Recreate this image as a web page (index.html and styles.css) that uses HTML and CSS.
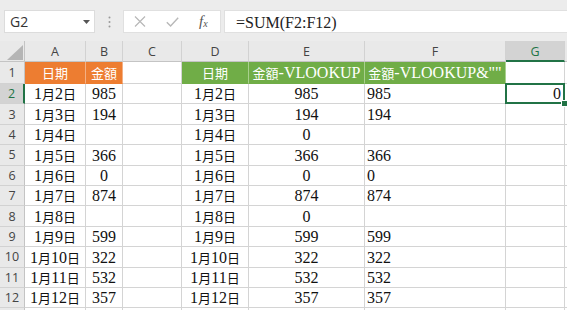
FILE: index.html
```html
<!DOCTYPE html>
<html lang="zh-Hant">
<head>
<meta charset="utf-8">
<title>VLOOKUP</title>
<link rel="stylesheet" href="styles.css">
</head>
<body>
<div class="toolbar">
  <div class="namebox"><span>G2</span><svg class="dd" width="7" height="4" viewBox="0 0 7 4"><path d="M0 0h7L3.5 4z" fill="#555"/></svg></div>
  <div class="grip"><svg width="3" height="12" viewBox="0 0 3 12"><circle cx="1.5" cy="1.5" r="1" fill="#999"/><circle cx="1.5" cy="6" r="1" fill="#999"/><circle cx="1.5" cy="10.5" r="1" fill="#999"/></svg></div>
  <div class="fbtns">
    <svg class="ic-x" width="12" height="11" viewBox="0 0 12 11"><path d="M1 0.5L11 10.5M11 0.5L1 10.5" stroke="#b8b8b8" stroke-width="1.2" fill="none"/></svg>
    <svg class="ic-ok" width="13" height="10" viewBox="0 0 13 10"><path d="M0.8 5.2L4.6 9L12.2 0.8" stroke="#b8b8b8" stroke-width="1.4" fill="none"/></svg>
    <span class="fx">f<sub>x</sub></span>
  </div>
  <div class="finput">=SUM(F2:F12)</div>
</div>

<div class="sheet">
  <div class="ch corner"><svg width="16" height="15" viewBox="0 0 16 15"><path d="M16 0V15H0z" fill="#b5b5b5"/></svg></div>
  <div class="ch">A</div><div class="ch">B</div><div class="ch">C</div><div class="ch">D</div><div class="ch">E</div><div class="ch">F</div><div class="ch ch-sel">G</div><div class="ch ch-end"></div>

  <div class="rh">1</div>
  <div class="cell hd or"><span class="k">日期</span></div>
  <div class="cell hd or"><span class="k">金額</span></div>
  <div class="cell"></div>
  <div class="cell hd gr"><span class="k">日期</span></div>
  <div class="cell hd gr"><span class="k">金額</span>-VLOOKUP</div>
  <div class="cell hd gr"><span class="k">金額</span>-VLOOKUP&amp;""</div>
  <div class="cell"></div><div class="cell end"></div>

  <div class="rh rh-sel">2</div>
  <div class="cell c">1<span class="k">月</span>2<span class="k">日</span></div><div class="cell c">985</div><div class="cell"></div>
  <div class="cell c">1<span class="k">月</span>2<span class="k">日</span></div><div class="cell c">985</div><div class="cell l">985</div>
  <div class="cell r sel">0</div><div class="cell end"></div>

  <div class="rh">3</div>
  <div class="cell c">1<span class="k">月</span>3<span class="k">日</span></div><div class="cell c">194</div><div class="cell"></div>
  <div class="cell c">1<span class="k">月</span>3<span class="k">日</span></div><div class="cell c">194</div><div class="cell l">194</div>
  <div class="cell"></div><div class="cell end"></div>

  <div class="rh">4</div>
  <div class="cell c">1<span class="k">月</span>4<span class="k">日</span></div><div class="cell c"></div><div class="cell"></div>
  <div class="cell c">1<span class="k">月</span>4<span class="k">日</span></div><div class="cell c">0</div><div class="cell l"></div>
  <div class="cell"></div><div class="cell end"></div>

  <div class="rh">5</div>
  <div class="cell c">1<span class="k">月</span>5<span class="k">日</span></div><div class="cell c">366</div><div class="cell"></div>
  <div class="cell c">1<span class="k">月</span>5<span class="k">日</span></div><div class="cell c">366</div><div class="cell l">366</div>
  <div class="cell"></div><div class="cell end"></div>

  <div class="rh">6</div>
  <div class="cell c">1<span class="k">月</span>6<span class="k">日</span></div><div class="cell c">0</div><div class="cell"></div>
  <div class="cell c">1<span class="k">月</span>6<span class="k">日</span></div><div class="cell c">0</div><div class="cell l">0</div>
  <div class="cell"></div><div class="cell end"></div>

  <div class="rh">7</div>
  <div class="cell c">1<span class="k">月</span>7<span class="k">日</span></div><div class="cell c">874</div><div class="cell"></div>
  <div class="cell c">1<span class="k">月</span>7<span class="k">日</span></div><div class="cell c">874</div><div class="cell l">874</div>
  <div class="cell"></div><div class="cell end"></div>

  <div class="rh">8</div>
  <div class="cell c">1<span class="k">月</span>8<span class="k">日</span></div><div class="cell c"></div><div class="cell"></div>
  <div class="cell c">1<span class="k">月</span>8<span class="k">日</span></div><div class="cell c">0</div><div class="cell l"></div>
  <div class="cell"></div><div class="cell end"></div>

  <div class="rh">9</div>
  <div class="cell c">1<span class="k">月</span>9<span class="k">日</span></div><div class="cell c">599</div><div class="cell"></div>
  <div class="cell c">1<span class="k">月</span>9<span class="k">日</span></div><div class="cell c">599</div><div class="cell l">599</div>
  <div class="cell"></div><div class="cell end"></div>

  <div class="rh">10</div>
  <div class="cell c">1<span class="k">月</span>10<span class="k">日</span></div><div class="cell c">322</div><div class="cell"></div>
  <div class="cell c">1<span class="k">月</span>10<span class="k">日</span></div><div class="cell c">322</div><div class="cell l">322</div>
  <div class="cell"></div><div class="cell end"></div>

  <div class="rh">11</div>
  <div class="cell c">1<span class="k">月</span>11<span class="k">日</span></div><div class="cell c">532</div><div class="cell"></div>
  <div class="cell c">1<span class="k">月</span>11<span class="k">日</span></div><div class="cell c">532</div><div class="cell l">532</div>
  <div class="cell"></div><div class="cell end"></div>

  <div class="rh">12</div>
  <div class="cell c">1<span class="k">月</span>12<span class="k">日</span></div><div class="cell c">357</div><div class="cell"></div>
  <div class="cell c">1<span class="k">月</span>12<span class="k">日</span></div><div class="cell c">357</div><div class="cell l">357</div>
  <div class="cell"></div><div class="cell end"></div>

  <div class="rh"></div>
  <div class="cell"></div><div class="cell"></div><div class="cell"></div><div class="cell"></div><div class="cell"></div><div class="cell"></div><div class="cell"></div><div class="cell end"></div>
</div>
</body>
</html>
```

FILE: styles.css
```css
html, body {
  margin: 0;
  padding: 0;
}
body {
  width: 567px;
  height: 310px;
  overflow: hidden;
  background: #e9e9e9;
  font-family: "Liberation Serif", "Noto Sans CJK TC", serif;
}

.toolbar {
  height: 41px;
  box-sizing: border-box;
  padding: 10px 0 0 4px;
  display: flex;
  align-items: flex-start;
  background: #ececec;
}
.namebox {
  width: 91px;
  height: 23px;
  box-sizing: border-box;
  background: #fff;
  border: 1px solid #dcdcdc;
  display: flex;
  align-items: center;
  justify-content: space-between;
  padding: 0 4px 0 5px;
  font-family: "Open Sans", "Noto Sans", sans-serif;
  font-size: 14px;
  color: #333;
}
.grip {
  width: 28px;
  height: 23px;
  display: flex;
  align-items: center;
  justify-content: center;
}
.fbtns {
  width: 98px;
  height: 23px;
  box-sizing: border-box;
  background: #fff;
  border: 1px solid #e0e0e0;
  display: flex;
  align-items: center;
  padding-left: 10px;
}
.ic-x { margin-right: 20px; }
.ic-ok { margin-right: 20px; }
.fx {
  font-family: "Liberation Serif", serif;
  font-style: italic;
  font-size: 15px;
  color: #555;
  line-height: 1;
}
.fx sub {
  font-size: 10px;
  vertical-align: baseline;
  position: relative;
  top: 1px;
}
.finput {
  flex: 1;
  height: 23px;
  margin-left: 3px;
  box-sizing: border-box;
  background: #fff;
  border: 1px solid #e0e0e0;
  border-right: none;
  padding: 1px 0 0 11px;
  font-size: 16px;
  line-height: 21px;
  color: #222;
}

.sheet {
  display: grid;
  grid-template-columns: 25px 61px 37px 59px 67px 116px 141px 59px 1fr;
  grid-template-rows: 21px 22px repeat(11, 20.4px) 20px;
  background: #fff;
}

.ch {
  background: #e9e9e9;
  border-right: 1px solid #d2d2d2;
  border-bottom: 1px solid #c4c4c4;
  box-sizing: border-box;
  display: flex;
  align-items: center;
  justify-content: center;
  font-family: "Open Sans", "Noto Sans", sans-serif;
  font-size: 12.5px;
  color: #444;
  padding-top: 1px;
}
.corner {
  align-items: flex-end;
  justify-content: flex-end;
  padding: 0 1px 1px 0;
  border-right-color: #c4c4c4;
}
.ch-sel {
  background: #d3d3d3;
  color: #217346;
  border-bottom: 2px solid #217346;
}
.ch-end { border-right: none; }

.rh {
  background: #e9e9e9;
  border-right: 1px solid #c4c4c4;
  border-bottom: 1px solid #d2d2d2;
  box-sizing: border-box;
  display: flex;
  align-items: center;
  justify-content: center;
  font-family: "Open Sans", "Noto Sans", sans-serif;
  font-size: 12.5px;
  color: #444;
}
.rh-sel {
  background: #d3d3d3;
  color: #217346;
  border-right: 2px solid #217346;
}

.cell {
  border-right: 1px solid #d4d4d4;
  border-bottom: 1px solid #d4d4d4;
  box-sizing: border-box;
  display: flex;
  align-items: flex-end;
  font-size: 16px;
  line-height: 18px;
  color: #111;
  white-space: nowrap;
  overflow: hidden;
}
.cell.end { border-right: none; }
.k {
  font-family: "Noto Sans CJK TC", sans-serif;
  font-size: 13px;
}
.c { justify-content: center; }
.l { justify-content: flex-start; padding-left: 2px; }
.r { justify-content: flex-end; padding-right: 3px; }

.hd {
  justify-content: center;
  color: #fff;
  padding-bottom: 1px;
}
.or {
  background: #ed7d31;
  border-right-color: #f4b084;
  border-bottom-color: #ed7d31;
}
.gr {
  background: #70ad47;
  border-right-color: #a9d08e;
  border-bottom-color: #70ad47;
}

.sel {
  position: relative;
  overflow: visible;
}
.sel::before {
  content: "";
  position: absolute;
  left: -1px;
  top: -1px;
  right: -1px;
  bottom: -1px;
  border: 2px solid #217346;
}
.sel::after {
  content: "";
  position: absolute;
  right: -4px;
  bottom: -4px;
  width: 5px;
  height: 5px;
  background: #217346;
  border: 1px solid #fff;
}
```
